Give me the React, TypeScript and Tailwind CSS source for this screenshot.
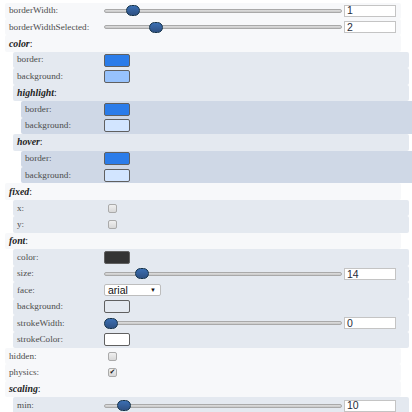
type Row =
  | { kind: 'header'; level: number; label: string }
  | { kind: 'range'; level: number; label: string; value: number; min: number; max: number }
  | { kind: 'color'; level: number; label: string; fill: string }
  | { kind: 'check'; level: number; label: string; checked: boolean }
  | { kind: 'select'; level: number; label: string; value: string }

const rows: Row[] = [
  { kind: 'range', level: 0, label: 'borderWidth', value: 1, min: 0, max: 10 },
  { kind: 'range', level: 0, label: 'borderWidthSelected', value: 2, min: 0, max: 10 },
  { kind: 'header', level: 0, label: 'color' },
  { kind: 'color', level: 1, label: 'border', fill: 'bg-[#2b7ce9]' },
  { kind: 'color', level: 1, label: 'background', fill: 'bg-[#97c2fc]' },
  { kind: 'header', level: 1, label: 'highlight' },
  { kind: 'color', level: 2, label: 'border', fill: 'bg-[#2b7ce9]' },
  { kind: 'color', level: 2, label: 'background', fill: 'bg-[#d2e5ff]' },
  { kind: 'header', level: 1, label: 'hover' },
  { kind: 'color', level: 2, label: 'border', fill: 'bg-[#2b7ce9]' },
  { kind: 'color', level: 2, label: 'background', fill: 'bg-[#d2e5ff]' },
  { kind: 'header', level: 0, label: 'fixed' },
  { kind: 'check', level: 1, label: 'x', checked: false },
  { kind: 'check', level: 1, label: 'y', checked: false },
  { kind: 'header', level: 0, label: 'font' },
  { kind: 'color', level: 1, label: 'color', fill: 'bg-[#343434]' },
  { kind: 'range', level: 1, label: 'size', value: 14, min: 0, max: 100 },
  { kind: 'select', level: 1, label: 'face', value: 'arial' },
  { kind: 'color', level: 1, label: 'background', fill: 'bg-transparent' },
  { kind: 'range', level: 1, label: 'strokeWidth', value: 0, min: 0, max: 50 },
  { kind: 'color', level: 1, label: 'strokeColor', fill: 'bg-white' },
  { kind: 'check', level: 0, label: 'hidden', checked: false },
  { kind: 'check', level: 0, label: 'physics', checked: true },
  { kind: 'header', level: 0, label: 'scaling' },
  { kind: 'range', level: 1, label: 'min', value: 12, min: 0, max: 200 },
]

const rowBg = ['bg-[#f7f8fa]', 'bg-[#e4e9f0]', 'bg-[#cfd8e6]']
const rowMl = ['ml-[5px]', 'ml-[13px]', 'ml-[21px]']
const labelW = ['w-[95px]', 'w-[87px]', 'w-[79px]']

function Slider({ value, min, max, shown }: { value: number; min: number; max: number; shown?: number }) {
  // thumb centre runs from 7px to (238 - 7)px
  const left = ((value - min) / (max - min)) * 224
  return (
    <div className="flex items-center">
      <div className="relative w-[238px] h-[11px] flex items-center">
        <div className="w-full h-[4px] rounded-[2px] border border-[#a9a9a9] bg-gradient-to-b from-[#dedede] to-[#c8c8c8]" />
        <div
          className="absolute top-0 w-[14px] h-[11px] rounded-full border border-[#14334b] bg-gradient-to-b from-[#3b6fb3] to-[#2f5183]"
          style={{ left }}
        />
      </div>
      <div className="ml-[2px] w-[52px] h-[12px] bg-white border border-[#c4c4c4] flex items-center pl-[2px] text-[10.5px] text-[#1f2b3a] font-['Liberation_Sans',sans-serif]">
        {shown ?? value}
      </div>
    </div>
  )
}

function Control({ row }: { row: Row }) {
  if (row.kind === 'range')
    return <Slider value={row.value} min={row.min} max={row.max} shown={row.label === 'min' ? 10 : undefined} />
  if (row.kind === 'color')
    return <div className={`w-[26px] h-[13px] rounded-[2px] border border-[#606060] ${row.fill}`} />
  if (row.kind === 'check')
    return (
      <div className="ml-[4px] w-[9px] h-[9px] rounded-[2px] border border-[#aaaaaa] bg-gradient-to-b from-[#f0f0f0] to-[#d8d8d8] flex items-center justify-center text-[7px] leading-none text-[#222] font-['DejaVu_Sans',sans-serif]">
        {row.checked ? '✔' : ''}
      </div>
    )
  if (row.kind === 'select')
    return (
      <div className="w-[57px] h-[12px] bg-white border border-[#bdbdbd] rounded-[2px] flex items-center justify-between pl-[3px] pr-[4px] text-[10.5px] text-[#111] font-['Liberation_Sans',sans-serif]">
        <span>{row.value}</span>
        <span className="text-[6px]">▼</span>
      </div>
    )
  return null
}

export default function App() {
  return (
    <div className="w-[412px] h-[412px] overflow-hidden bg-white pt-[2.5px] font-['Liberation_Serif',serif] text-[9.2px] leading-none text-[#4d4d4d]">
      {rows.map((row, i) => (
        <div
          key={i}
          className={`flex items-center h-[16.46px] w-[396px] shrink-0 pl-[4px] rounded-[2px] ${rowBg[row.level]} ${rowMl[row.level]}`}
        >
          {row.kind === 'header' ? (
            <div className="text-[#222] text-[9.8px]">
              <i className="font-bold">{row.label}</i>:
            </div>
          ) : (
            <>
              <div className={`shrink-0 ${labelW[row.level]}`}>{row.label}:</div>
              <Control row={row} />
            </>
          )}
        </div>
      ))}
    </div>
  )
}
